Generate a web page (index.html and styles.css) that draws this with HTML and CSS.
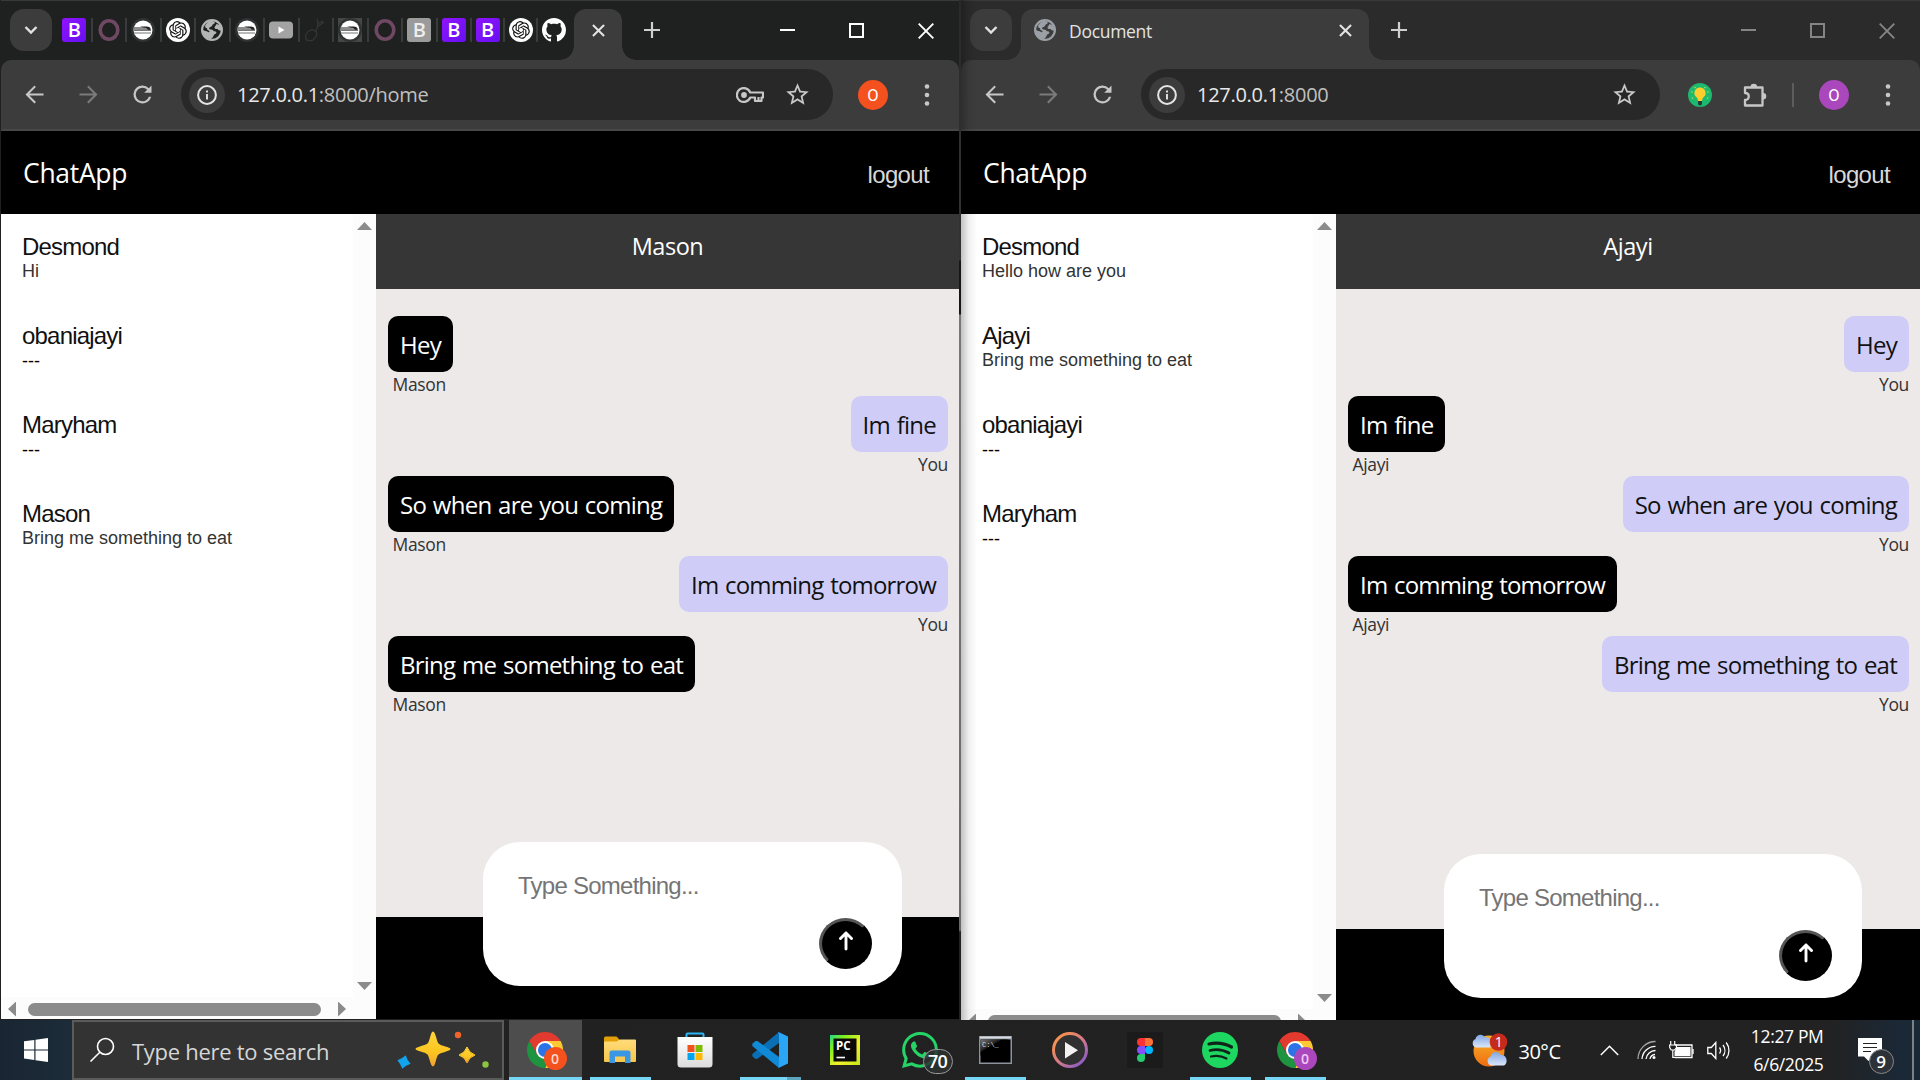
FILE: index.html
```html
<!DOCTYPE html>
<html lang="en">
<head>
<meta charset="utf-8">
<title>ChatApp</title>
<link rel="stylesheet" href="styles.css">
</head>
<body>
<svg class="defs" width="0" height="0">
  <defs>
    <linearGradient id="g-ring" x1="0" y1="0" x2="1" y2="1"><stop offset="0" stop-color="#ff9a3c"/><stop offset=".5" stop-color="#d97a86"/><stop offset="1" stop-color="#7a55d6"/></linearGradient>
    <linearGradient id="g-pc" x1="0" y1="0" x2="1" y2="1"><stop offset="0" stop-color="#21d789"/><stop offset=".25" stop-color="#7cf01e"/><stop offset=".6" stop-color="#f3f02a"/><stop offset="1" stop-color="#c3e61e"/></linearGradient>
    <linearGradient id="g-sun" x1="0" y1="0" x2="0" y2="1"><stop offset="0" stop-color="#f8b52c"/><stop offset="1" stop-color="#ef6c0f"/></linearGradient>
    <linearGradient id="g-cloud" x1="0" y1="0" x2="0" y2="1"><stop offset="0" stop-color="#7fa5e6"/><stop offset="1" stop-color="#dbe7fa"/></linearGradient>
    <linearGradient id="g-star" x1="0" y1="0" x2="0" y2="1"><stop offset="0" stop-color="#ffd53a"/><stop offset=".6" stop-color="#fcc521"/><stop offset="1" stop-color="#f0a032"/></linearGradient>
    <linearGradient id="g-store" x1="0" y1="0" x2="0" y2="1"><stop offset="0" stop-color="#fff"/><stop offset="1" stop-color="#dcdcdc"/></linearGradient>
    <linearGradient id="g-folder" x1="0" y1="0" x2="0" y2="1"><stop offset="0" stop-color="#ffdc7a"/><stop offset="1" stop-color="#f7c64c"/></linearGradient>
    <linearGradient id="g-cmd" x1="0" y1="0" x2="1" y2="1"><stop offset="0" stop-color="#777"/><stop offset=".35" stop-color="#222"/><stop offset=".4" stop-color="#000"/></linearGradient>
  </defs>
  <symbol id="chev" viewBox="0 0 14 10"><path d="M1.5 2l5.500 5.500L12.500 2" fill="none" stroke="currentColor" stroke-width="2.400"/></symbol>
  <symbol id="x" viewBox="0 0 14 14"><path d="M1 1l12 12M13 1L1 13" fill="none" stroke="currentColor" stroke-width="2.200"/></symbol>
  <symbol id="plus" viewBox="0 0 16 16"><path d="M8 0v16M0 8h16" stroke="currentColor" stroke-width="2.200"/></symbol>
  <symbol id="back" viewBox="0 0 24 24"><path fill="currentColor" d="M20 11.100H7.500l5.700-5.700L12 4l-8 8 8 8 1.300-1.400-5.800-5.700H20z"/></symbol>
  <symbol id="reload" viewBox="0 0 24 24"><path fill="currentColor" d="M17.650 6.350A7.958 7.958 0 0 0 12 4a8 8 0 1 0 7.730 10h-2.080A6 6 0 1 1 12 6c1.660 0 3.140.69 4.220 1.780L13.500 10.500H20V4l-2.350 2.350z"/></symbol>
  <symbol id="info" viewBox="0 0 20 20"><circle cx="10" cy="10" r="8.900" fill="none" stroke="currentColor" stroke-width="2"/><path d="M10 9v5.500M10 5.500v2" stroke="currentColor" stroke-width="1.900"/></symbol>
  <symbol id="star" viewBox="0 0 24 24"><path fill="currentColor" d="M22 9.240l-7.190-.62L12 2 9.190 8.630 2 9.240l5.460 4.730L5.820 21 12 17.270 18.180 21l-1.630-7.030L22 9.240zM12 15.400l-3.760 2.270 1-4.280-3.320-2.880 4.380-.38L12 6.100l1.710 4.040 4.380.38-3.320 2.880 1 4.280L12 15.400z"/></symbol>
  <symbol id="key" viewBox="0 0 28 16"><g fill="none" stroke="currentColor" stroke-width="2.200"><path d="M14.200 5.500A6.900 6.900 0 1 0 14.200 10.500H19V14h6.500v-3.500H27V5.500z" stroke-linejoin="round"/><path d="M22.500 10v4"/></g><circle cx="8" cy="8" r="2.900" fill="currentColor"/></symbol>
  <symbol id="dots" viewBox="0 0 6 24"><g fill="currentColor"><circle cx="3" cy="3.500" r="2.300"/><circle cx="3" cy="12" r="2.300"/><circle cx="3" cy="20.500" r="2.300"/></g></symbol>
  <symbol id="puzzle" viewBox="0 0 26 26"><path d="M3 5.500h17.500v18H3v-5.500c5 0 5-7 0-7z" fill="none" stroke="currentColor" stroke-width="2.300" stroke-linejoin="round"/><path fill="currentColor" d="M8.500 5a3.300 3.300 0 0 1 6.600 0zM21 11a3.300 3.300 0 0 1 0 6.600z"/></symbol>
  <symbol id="bulb" viewBox="0 0 24 24"><circle cx="12" cy="12" r="12" fill="#1cb96e"/><g fill="#b9e04b"><circle cx="4" cy="9" r=".8"/><circle cx="7" cy="4.500" r=".8"/><circle cx="17" cy="4.500" r=".8"/><circle cx="20" cy="9" r=".8"/><circle cx="4.500" cy="15" r=".8"/><circle cx="19.500" cy="15" r=".8"/></g><path d="M12 4.500a5.500 5.500 0 0 0-3.500 9.800c1 1 1.300 2 1.500 3.700h4c.2-1.700.5-2.700 1.500-3.700A5.500 5.500 0 0 0 12 4.500z" fill="#ffcd2e"/><path d="M10 18h4v2.500a2 2 0 0 1-4 0z" fill="#243a3a"/></symbol>
  <symbol id="globe" viewBox="2 2 20 20"><circle cx="12" cy="12" r="9" fill="none" stroke="currentColor" stroke-width="2"/><path fill="currentColor" d="M11 3.500c1 .5 3 .3 3.500 1.700.3 1.300-2 1.400-2.300 2.600-.2 1.300-2 1.200-2.700 2.200-.5 1 .3 1.600 1.500 1.500 1.500 0 2.300.7 2.500 1.700 1.500 0 2.500.3 2.500 1.300-.2 1.300-2 1-2.500 2.500-.3 1.500-1.500 2-2.500 3.500-4-.5-7.500-4-7.500-8.500 1.500.8 3.800.8 4.500 1.700.8.800 1.800.5 1.700-.7-1.200-.3-2.500-1.300-2.200-2.500-1.300-.2-2-1-1.700-2.500C7 5.500 9 4 11 3.500zM16 6.500l3 1c1 1.500 1.700 3 1.500 5-1.500.3-2.500-.5-3.500-1.500-1.300.3-2.700-.2-2.700-1.300.2-1.300 1.500-1.700 1.700-3.200z"/></symbol>
  <symbol id="planet" viewBox="0 0 24 24"><circle cx="12" cy="12" r="12" fill="#303233"/><circle cx="12" cy="12" r="9.500" fill="#fff"/><path d="M2.500 9h13c3 0 4 1 4 3.200H2.500" fill="#8d8d8d"/><path d="M2.500 12.300h17.500M3 15h17" fill="none" stroke="#777" stroke-width="1.200"/><path d="M9 8.500h6.500c2.500 0 4 1.200 4.300 3.200h-3c-.5-1.500-1.500-2-3.500-2z" fill="#222"/></symbol>
  <symbol id="gpt" viewBox="0 0 24 24"><circle cx="12" cy="12" r="12" fill="#fff"/><path transform="translate(3.100 3.100) scale(.74)" fill="#111" d="M22.282 9.821a5.985 5.985 0 0 0-.516-4.910 6.046 6.046 0 0 0-6.510-2.900A6.065 6.065 0 0 0 4.981 4.182a5.985 5.985 0 0 0-3.998 2.900 6.046 6.046 0 0 0 .743 7.097 5.980 5.980 0 0 0 .511 4.911 6.051 6.051 0 0 0 6.515 2.900A5.985 5.985 0 0 0 13.260 24a6.056 6.056 0 0 0 5.772-4.206 5.989 5.989 0 0 0 3.998-2.900 6.056 6.056 0 0 0-.748-7.073zm-9.022 12.608a4.476 4.476 0 0 1-2.876-1.041l.142-.080 4.778-2.758a.795.795 0 0 0 .393-.681v-6.737l2.020 1.169a.071.071 0 0 1 .038.052v5.583a4.504 4.504 0 0 1-4.495 4.494zm-9.661-4.125a4.471 4.471 0 0 1-.535-3.014l.142.085 4.783 2.758a.771.771 0 0 0 .781 0l5.843-3.369v2.332a.080.080 0 0 1-.033.062L9.740 19.950a4.499 4.499 0 0 1-6.141-1.646zM2.341 7.896a4.485 4.485 0 0 1 2.366-1.973V11.600a.766.766 0 0 0 .388.677l5.814 3.354-2.020 1.169a.076.076 0 0 1-.071 0l-4.830-2.787A4.504 4.504 0 0 1 2.341 7.872zm16.596 3.856L13.104 8.364 15.119 7.200a.076.076 0 0 1 .071 0l4.830 2.791a4.494 4.494 0 0 1-.677 8.104v-5.677a.790.790 0 0 0-.407-.667zm2.011-3.023l-.142-.085-4.774-2.782a.776.776 0 0 0-.785 0L9.409 9.230V6.897a.066.066 0 0 1 .028-.062l4.830-2.787a4.499 4.499 0 0 1 6.680 4.660zM8.307 12.863l-2.020-1.164a.080.080 0 0 1-.038-.057V6.074a4.499 4.499 0 0 1 7.376-3.454l-.142.081L8.704 5.459a.795.795 0 0 0-.393.681zm1.098-2.365l2.602-1.500 2.607 1.500v2.999l-2.597 1.500-2.607-1.500Z"/></symbol>
  <symbol id="ring" viewBox="0 0 24 24"><ellipse cx="12" cy="12" rx="8.800" ry="9.300" fill="none" stroke="#6f4863" stroke-width="3.600"/></symbol>
  <symbol id="tube" viewBox="0 0 24 24"><rect y="3.500" width="24" height="17" rx="4" fill="#a3a3a3"/><path d="M9.500 8.500v7l6-3.500z" fill="#fff"/></symbol>
  <symbol id="sketch" viewBox="0 0 24 24"><path d="M4 23c-4-2-3-9 3-11 6-1 7 5 4 8-2 3-5 3-7 2M12 13c2-4 3-7 1-12M13 6l6-3M13 9l7-5" fill="none" stroke="#343636" stroke-width="1.300"/></symbol>
  <symbol id="hub" viewBox="0 0 16 16"><path fill="#fff" d="M8 0C3.580 0 0 3.580 0 8c0 3.540 2.290 6.530 5.470 7.590.4.070.55-.17.55-.38 0-.19-.01-.82-.01-1.490-2.010.37-2.530-.49-2.690-.94-.09-.23-.48-.94-.82-1.130-.28-.15-.68-.52-.01-.53.63-.01 1.080.58 1.230.82.72 1.210 1.870.87 2.330.66.070-.52.28-.87.51-1.070-1.780-.2-3.640-.89-3.640-3.950 0-.87.31-1.590.82-2.150-.08-.2-.36-1.020.08-2.120 0 0 .67-.21 2.200.82.64-.18 1.320-.27 2-.27s1.360.09 2 .27c1.530-1.040 2.200-.82 2.200-.82.44 1.100.16 1.920.08 2.120.51.56.82 1.270.82 2.150 0 3.070-1.870 3.750-3.650 3.950.29.25.54.73.54 1.480 0 1.070-.01 1.930-.01 2.200 0 .21.15.46.55.38A8.010 8.010 0 0 0 16 8c0-4.420-3.580-8-8-8z"/></symbol>
  <symbol id="min" viewBox="0 0 16 16"><path d="M0 8h15" stroke="currentColor" stroke-width="2"/></symbol>
  <symbol id="max" viewBox="0 0 16 16"><path d="M1 1h13v13H1z" fill="none" stroke="currentColor" stroke-width="2"/></symbol>
  <symbol id="close" viewBox="0 0 16 16"><path d="M.7.7l14.600 14.600M15.300.7L.7 15.300" stroke="currentColor" stroke-width="1.900"/></symbol>
  <symbol id="send" viewBox="0 0 16 20"><path d="M8 18V2M2.500 7.500L8 2l5.500 5.500" fill="none" stroke="#fff" stroke-width="2.900" stroke-linecap="round" stroke-linejoin="round"/></symbol>
  <symbol id="chrome" viewBox="2 2 44 44"><path fill="#fcc934" d="M24 13H43.050A22 22 0 0 1 24 46L33.530 29.500z"/><path fill="#1e9440" d="M33.530 29.500L24 46A22 22 0 0 1 4.950 13L14.470 29.500z"/><path fill="#e23a2e" d="M14.470 29.500L4.950 13A22 22 0 0 1 43.050 13H24z"/><circle cx="24" cy="24" r="11" fill="#fff"/><circle cx="24" cy="24" r="8.600" fill="#2b74e8"/></symbol>
</svg>

<div class="desktop">
  <div class="windows">
    <!-- left window -->
    <section class="window focused">
      <div class="tabstrip">
        <div class="tab-menu"><svg width="14" height="10"><use href="#chev"/></svg></div>
        <div class="pinned">
          <div class="pin"><b class="boot">B</b></div>
          <div class="pin"><svg><use href="#ring"/></svg></div>
          <div class="pin"><svg><use href="#planet"/></svg></div>
          <div class="pin"><svg><use href="#gpt"/></svg></div>
          <div class="pin"><svg class="grey"><use href="#globe"/></svg></div>
          <div class="pin"><svg><use href="#planet"/></svg></div>
          <div class="pin"><svg><use href="#tube"/></svg></div>
          <div class="pin"><svg><use href="#sketch"/></svg></div>
          <div class="pin"><svg class="boxed"><use href="#planet"/></svg></div>
          <div class="pin"><svg><use href="#ring"/></svg></div>
          <div class="pin"><b class="boot dull">B</b></div>
          <div class="pin"><b class="boot">B</b></div>
          <div class="pin near"><b class="boot">B</b></div>
          <div class="pin near"><svg><use href="#gpt"/></svg></div>
          <div class="pin last"><svg><use href="#hub"/></svg></div>
        </div>
        <div class="tab mini"><svg width="13" height="13"><use href="#x"/></svg></div>
        <svg class="new-tab" width="16" height="16"><use href="#plus"/></svg>
        <div class="controls">
          <svg><use href="#min"/></svg><svg><use href="#max"/></svg><svg><use href="#close"/></svg>
        </div>
      </div>
      <div class="toolbar">
        <svg class="nav"><use href="#back"/></svg>
        <svg class="nav off"><use href="#back"/></svg>
        <svg class="nav"><use href="#reload"/></svg>
        <div class="omnibox">
          <span class="site"><svg width="20" height="20"><use href="#info"/></svg></span>
          <span class="url">127.0.0.1<i>:8000/home</i></span>
          <svg class="key" width="28" height="16"><use href="#key"/></svg>
          <svg class="fav" width="27" height="27"><use href="#star"/></svg>
        </div>
        <span class="avatar orange">O</span>
        <svg class="more" width="6" height="24"><use href="#dots"/></svg>
      </div>
      <header class="app-bar"><span class="brand">ChatApp</span><span class="logout">logout</span></header>
      <main class="chat-app">
        <aside class="contacts">
          <ul class="list">
            <li><h3>Desmond</h3><p>Hi</p></li>
            <li><h3>obaniajayi</h3><p class="none">---</p></li>
            <li><h3>Maryham</h3><p class="none">---</p></li>
            <li><h3>Mason</h3><p>Bring me something to eat</p></li>
          </ul>
          <div class="vbar"><i class="up"></i><i class="down"></i></div>
          <div class="hbar"><i class="left"></i><i class="thumb"></i><i class="right"></i></div>
        </aside>
        <section class="chat">
          <h2 class="peer">Mason</h2>
          <div class="messages">
            <div class="msg"><p>Hey</p><small>Mason</small></div>
            <div class="msg mine"><p>Im fine</p><small>You</small></div>
            <div class="msg"><p>So when are you coming</p><small>Mason</small></div>
            <div class="msg mine"><p class="tight">Im comming tomorrow</p><small>You</small></div>
            <div class="msg"><p>Bring me something to eat</p><small>Mason</small></div>
          </div>
          <footer class="composer"><div class="box"><span class="hint">Type Something...</span><span class="send"><svg width="16" height="20"><use href="#send"/></svg></span></div></footer>
        </section>
      </main>
    </section>

    <div class="seam"></div>

    <!-- right window -->
    <section class="window behind">
      <div class="tabstrip">
        <div class="tab-menu"><svg width="14" height="10"><use href="#chev"/></svg></div>
        <div class="tab wide">
          <svg class="globe" width="22" height="22"><use href="#globe"/></svg>
          <span class="tab-title">Document</span>
          <svg width="13" height="13"><use href="#x"/></svg>
        </div>
        <svg class="new-tab" width="16" height="16"><use href="#plus"/></svg>
        <div class="controls">
          <svg><use href="#min"/></svg><svg><use href="#max"/></svg><svg><use href="#close"/></svg>
        </div>
      </div>
      <div class="toolbar">
        <svg class="nav"><use href="#back"/></svg>
        <svg class="nav off"><use href="#back"/></svg>
        <svg class="nav"><use href="#reload"/></svg>
        <div class="omnibox">
          <span class="site"><svg width="20" height="20"><use href="#info"/></svg></span>
          <span class="url">127.0.0.1<i>:8000</i></span>
          <svg class="fav" width="27" height="27"><use href="#star"/></svg>
        </div>
        <svg class="ext" width="24" height="24"><use href="#bulb"/></svg>
        <svg class="ext-menu" width="26" height="26"><use href="#puzzle"/></svg>
        <span class="rule"></span>
        <span class="avatar purple">O</span>
        <svg class="more" width="6" height="24"><use href="#dots"/></svg>
      </div>
      <header class="app-bar"><span class="brand">ChatApp</span><span class="logout">logout</span></header>
      <main class="chat-app">
        <aside class="contacts">
          <ul class="list">
            <li><h3>Desmond</h3><p>Hello how are you</p></li>
            <li><h3>Ajayi</h3><p>Bring me something to eat</p></li>
            <li><h3>obaniajayi</h3><p class="none">---</p></li>
            <li><h3>Maryham</h3><p class="none">---</p></li>
          </ul>
          <div class="vbar"><i class="up"></i><i class="down"></i></div>
          <div class="hbar"><i class="left"></i><i class="thumb"></i><i class="right"></i></div>
        </aside>
        <section class="chat">
          <h2 class="peer">Ajayi</h2>
          <div class="messages">
            <div class="msg mine"><p>Hey</p><small>You</small></div>
            <div class="msg"><p>Im fine</p><small>Ajayi</small></div>
            <div class="msg mine"><p>So when are you coming</p><small>You</small></div>
            <div class="msg"><p class="tight">Im comming tomorrow</p><small>Ajayi</small></div>
            <div class="msg mine"><p>Bring me something to eat</p><small>You</small></div>
          </div>
          <footer class="composer"><div class="box"><span class="hint">Type Something...</span><span class="send"><svg width="16" height="20"><use href="#send"/></svg></span></div></footer>
        </section>
      </main>
    </section>
  </div>

  <footer class="taskbar">
    <div class="start"><svg width="24" height="24" viewBox="0 0 24 24"><path fill="#fff" d="M0 3.300L10.300 2v9.400H0zM11.500 1.800L24 0v11.400H11.500zM0 12.500h10.300V22L0 20.600zM11.500 12.500H24V24l-12.500-1.800z"/></svg></div>
    <div class="search">
      <svg width="26" height="26" viewBox="0 0 26 26"><circle cx="16.500" cy="9.500" r="8" fill="none" stroke="#fff" stroke-width="1.600"/><path d="M10.800 15.200L1.500 24.500" stroke="#fff" stroke-width="1.600"/></svg>
      <span>Type here to search</span>
      <svg class="sparkles" width="96" height="40" viewBox="0 0 96 40"><path transform="translate(37 19)" fill="url(#g-star)" d="M0-17.500C2.500-17.500 3.500-8 5.500-5.500S17.500-2 17.500 0 8 3.500 5.500 5.500 2.500 17.500 0 17.500-3.500 8-5.500 5.500-17.500 2-17.500 0-8-3.500-5.500-5.500-2.500-17.500 0-17.500z"/><path transform="translate(71 25)" fill="url(#g-star)" d="M0-8Q2-2 8 0 2 2 0 8-2 2-8 0-2-2 0-8z" stroke="url(#g-star)" stroke-width="1"/><path transform="translate(8 32) rotate(15)" fill="#12a5ee" stroke="#12a5ee" d="M0-6Q2-2.500 6 0 2.500 2.500 0 6-2.500 2.500-6 0-2.500-2.500 0-6z"/><circle cx="62" cy="5" r="3.200" fill="#f0642c"/><circle cx="89.500" cy="34.500" r="3.200" fill="#8cc63f"/></svg>
    </div>
    <nav class="apps">
      <div class="app on active"><svg width="36" height="36"><use href="#chrome"/></svg><b class="badge-o">0</b></div>
      <div class="app on"><svg width="32" height="28" viewBox="0 0 32 28"><path d="M0 2a1.500 1.500 0 0 1 1.500-1.500h11L15 3v4H0z" fill="#e3a008"/><path d="M0 5.500h13l2.500-2H31a1 1 0 0 1 1 1V25a1 1 0 0 1-1 1H1a1 1 0 0 1-1-1z" fill="url(#g-folder)"/><path d="M5.500 27V16.500a2 2 0 0 1 2-2h17a2 2 0 0 1 2 2V27h-5.500v-6.500H11V27z" fill="#3b97e3"/></svg></div>
      <div class="app"><svg width="36" height="36" viewBox="0 0 36 36"><path d="M9.500 6V2.500a1 1 0 0 1 1-1h15a1 1 0 0 1 1 1V6" fill="none" stroke="#2eb5f5" stroke-width="2"/><path d="M.5 5h35v27a3.500 3.500 0 0 1-3.500 3.500H4A3.500 3.500 0 0 1 .5 32z" fill="url(#g-store)"/><path fill="#f1511b" d="M10.500 13h7v7h-7z"/><path fill="#80bb03" d="M18.500 13h7v7h-7z"/><path fill="#00a4ef" d="M10.500 21h7v7h-7z"/><path fill="#ffb900" d="M18.500 21h7v7h-7z"/></svg></div>
      <div class="app on split"><svg width="36" height="36" viewBox="0 0 36 36"><path d="M27 0v11L5.500 26.700 3.500 27 .3 24.200v-2.100z" fill="#0a6fb5"/><path d="M.3 11.800L3.500 9h2L27 25v11L.3 14z" fill="#1089d6"/><path d="M26.500 0L36 4.500v27L26.500 36c-1 0 .5-1 .5-2V2c0-1-1.500-2-.5-2z" fill="#2ba5f5"/></svg></div>
      <div class="app"><svg width="30" height="30" viewBox="0 0 30 30"><path fill="url(#g-pc)" d="M0 0h30v30H0z"/><path d="M3.500 3.500h23v23h-23z" fill="#0a0a0a"/><path d="M6.500 22.500h8.500" stroke="#fff" stroke-width="1.600"/><text x="6" y="15" class="pc">PC</text></svg></div>
      <div class="app"><svg width="36" height="36" viewBox="0 0 16 16"><path fill="#25d366" d="M13.601 2.326A7.850 7.850 0 0 0 7.994 0C3.627 0 .068 3.558.064 7.926c0 1.399.366 2.760 1.057 3.965L0 16l4.204-1.102a7.900 7.900 0 0 0 3.790.965h.004c4.368 0 7.926-3.558 7.930-7.930A7.900 7.900 0 0 0 13.600 2.326zM7.994 14.521a6.600 6.600 0 0 1-3.356-.92l-.24-.144-2.494.654.666-2.433-.156-.251a6.560 6.560 0 0 1-1.007-3.505c0-3.626 2.957-6.584 6.591-6.584a6.560 6.560 0 0 1 4.660 1.931 6.560 6.560 0 0 1 1.928 4.660c-.004 3.639-2.961 6.592-6.592 6.592m3.615-4.934c-.197-.099-1.170-.578-1.353-.646-.182-.065-.315-.099-.445.099-.133.197-.513.646-.627.775-.114.133-.232.148-.43.05-.197-.1-.836-.308-1.592-.985-.59-.525-.985-1.175-1.103-1.372-.114-.198-.011-.304.088-.403.087-.088.197-.232.296-.346.1-.114.133-.198.198-.33.065-.134.034-.248-.015-.347-.05-.099-.445-1.076-.612-1.470-.16-.389-.323-.335-.445-.34-.114-.007-.247-.007-.38-.007a.73.73 0 0 0-.529.247c-.182.198-.691.677-.691 1.654s.71 1.916.81 2.049c.098.133 1.394 2.132 3.383 2.992.47.205.84.326 1.129.418.475.152.904.129 1.246.08.38-.058 1.171-.48 1.338-.943.164-.464.164-.86.114-.943-.049-.084-.182-.133-.38-.232"/></svg><b class="count">70</b></div>
      <div class="app on"><svg width="33" height="28" viewBox="0 0 33 28"><path d="M0 0h33v28H0z" fill="#8c939c"/><path d="M1 .5h31v2H1z" fill="#d7dbe2"/><path d="M1.500 3.500h30v23h-30z" fill="#000"/><path d="M1.500 3.500h28Q6 9 1.500 20z" fill="url(#g-cmd)"/><text x="3" y="11" class="cmd">C:\_</text></svg></div>
      <div class="app"><svg width="36" height="36" viewBox="0 0 36 36"><circle cx="18" cy="18" r="16.500" fill="#303030" stroke="url(#g-ring)" stroke-width="3"/><path d="M13 10v16.500l13-8.300z" fill="#f2f2f2"/></svg></div>
      <div class="app"><svg width="36" height="36" viewBox="0 0 36 36"><rect width="36" height="36" rx="2" fill="#1b1b1b"/><path d="M14 6h4v8h-4a4 4 0 0 1 0-8z" fill="#f33"/><path d="M18 6h4a4 4 0 0 1 0 8h-4z" fill="#ff7237"/><path d="M14 14h4v8h-4a4 4 0 0 1 0-8z" fill="#874fff"/><circle cx="22" cy="18" r="4" fill="#00b6ff"/><path d="M14 22h4v4a4 4 0 1 1-4-4z" fill="#24cb71"/></svg></div>
      <div class="app on"><svg width="36" height="36" viewBox="0 0 36 36"><circle cx="18" cy="18" r="18" fill="#1ed760"/><g fill="none" stroke="#10251a" stroke-linecap="round"><path d="M7 12q12-2.500 22.500 3" stroke-width="3.200"/><path d="M8 18.500q10-2.500 19 2.500" stroke-width="2.700"/><path d="M9 24.500q8.500-2 15.500 2" stroke-width="2.200"/></g></svg></div>
      <div class="app on"><svg width="36" height="36"><use href="#chrome"/></svg><b class="badge-o violet">0</b></div>
    </nav>
    <div class="tray">
      <svg class="weather" width="37" height="34" viewBox="0 0 37 34"><circle cx="18" cy="18" r="15.500" fill="url(#g-sun)"/><path d="M5 14.500a4.500 4.500 0 0 1-.5-8.500C5 1 12 0 14 4.500c5-1 6.500 3 5.500 10z" fill="url(#g-cloud)"/><path d="M20 32.500a4.800 4.800 0 0 1-.5-9c1-5 8-6.500 10.500-1.500 6-.5 7.500 8 3 10.500z" fill="url(#g-cloud)"/><circle cx="27.500" cy="9" r="8.800" fill="#c42b1c"/><text x="23.800" y="14.300" class="one">1</text></svg>
      <span class="temp">30°C</span>
      <svg class="chevron" width="19" height="11" viewBox="0 0 19 11"><path d="M.8 10L9.500 1.300 18.200 10" fill="none" stroke="#fff" stroke-width="1.500"/></svg>
      <svg class="wifi" width="20" height="20" viewBox="0 0 20 20"><g fill="none" stroke="#fff" stroke-width="1.300"><path d="M1 19A17.500 17.500 0 0 1 18.500 1.500" opacity=".6"/><path d="M5 19A13.500 13.500 0 0 1 18.500 6.300"/><path d="M9 19a9.500 9.500 0 0 1 9.500-8.500"/><path d="M13 19a5.500 5.500 0 0 1 5-4.500"/></g><circle cx="17" cy="17.500" r="1.500" fill="#fff"/></svg>
      <svg class="battery" width="25" height="18" viewBox="0 0 25 18"><path d="M6 4h17v12.500H6" fill="none" stroke="#fff" stroke-width="1.300"/><path d="M7.500 6h14v9H5.500v-4z" fill="#fff"/><path d="M24 8v5" stroke="#fff" stroke-width="1.300"/><path d="M1.700 0v4M5.700 0v4M0 4h7.500v2.500l-2 2.500H2.200L.7 6.500V4M3.800 9v7.300H6" fill="none" stroke="#fff" stroke-width="1.200"/></svg>
      <svg class="sound" width="23" height="19" viewBox="0 0 23 19"><g fill="none" stroke="#fff" stroke-width="1.300"><path d="M.8 6.500h3.500l4.500-5v16l-4.500-5H.8z"/><path d="M12.500 6.500a5 5 0 0 1 0 6M16 4a9 9 0 0 1 0 11M19.200 1.500a13 13 0 0 1 0 16"/></g></svg>
      <div class="clock"><span>12:27 PM</span><span>6/6/2025</span></div>
      <div class="notice"><svg width="24" height="24" viewBox="0 0 24 24"><path d="M0 0h24v18.500H15L10.500 23 6 18.500H0z" fill="#fff"/><path d="M5 5.500h14M5 9.500h14M5 13.500h8" stroke="#222" stroke-width="1.200"/></svg><b>9</b></div>
      <span class="peek"></span>
    </div>
  </footer>
</div>
</body>
</html>
```
FILE: styles.css
```css
* { box-sizing: border-box; margin: 0; padding: 0; }
body { width: 1920px; height: 1080px; overflow: hidden; background: #202020; font-family: "Open Sans", "Noto Sans", sans-serif; }
i { font-style: normal; }
svg { display: block; flex: none; }
.defs { position: absolute; }

.desktop { display: grid; grid-template-rows: 1020px 60px; height: 1080px; }
.windows { display: grid; grid-template-columns: 958px 2px 959px; padding-left: 1px; height: 1020px; overflow: hidden; align-items: start; }
.window { display: flex; flex-direction: column; position: relative; background: linear-gradient(var(--strip) 80px, #000 80px); }
.focused { height: 1019px; --strip: #1f2120; --ctl: #fff; }
.behind { height: 1031px; --strip: #2b2b2b; --ctl: #858585; }
.behind::before { content: ""; position: absolute; left: 0; top: 0; bottom: 0; width: 16px; background: linear-gradient(90deg, rgba(0,0,0,.24), rgba(0,0,0,.06) 50%, transparent); z-index: 3; }
.seam { height: 1020px; background: linear-gradient(#2a2a2a 0, #333 260px, #161616 261px, #161616 314px, #777 315px, #6a6a6a 930px, #222 932px); }

/* tab strip */
.tabstrip { height: 60px; flex: none; background: var(--strip); display: flex; align-items: flex-start; padding: 8px 0 0 9px; color: #e3e3e3; border-top: 1px solid #383a3a; }
.tab-menu { width: 42px; height: 42px; border-radius: 14px; background: #3c3c3c; display: flex; align-items: center; justify-content: center; flex: none; }
.pinned { display: flex; margin-left: 6px; width: 516px; height: 42px; }
.pin { width: 34.5px; display: flex; align-items: center; justify-content: center; border-right: 2px solid #3a3c3c; height: 24px; margin-top: 9px; flex: none; }
.pin.near { width: 33px; }
.pin.last { border: 0; width: 32px; }
.pin svg { width: 24px; height: 24px; }
.pin svg.grey { width: 22px; height: 22px; color: #b4b4b4; }
.pin svg.boxed { background: #454747; }
.boot { width: 24px; height: 24px; border-radius: 3px; background: linear-gradient(135deg, #9013fe, #6610f2); color: #fff; font: 600 20px/24px "Open Sans", sans-serif; text-align: center; }
.boot.dull { background: #9b9b9b; color: #eee; }
.tab { height: 51px; background: #3c3c3c; border-radius: 12px 12px 0 0; display: flex; align-items: center; position: relative; flex: none; padding-bottom: 9px; color: #e3e3e3; }
.tab::before, .tab::after { content: ""; position: absolute; bottom: 0; width: 14px; height: 14px; }
.tab::before { left: -14px; background: radial-gradient(circle at 0 0, transparent 13.5px, #3c3c3c 14px); }
.tab::after { right: -14px; background: radial-gradient(circle at 100% 0, transparent 13.5px, #3c3c3c 14px); }
.tab.mini { width: 48px; justify-content: center; }
.tab.wide { width: 348px; margin-left: 9px; padding-left: 13px; }
.tab.wide > svg:last-child { margin-left: auto; margin-right: 17px; }
.globe { color: #9aa0a6; }
.tab-title { font-size: 17.5px; letter-spacing: -.3px; margin-left: 13px; line-height: 42px; padding-top: 2px; }
.new-tab { margin: 13px 0 0 22px; color: #cfcfcf; }
.controls { margin-left: auto; display: flex; gap: 53px; margin-right: 25px; padding-top: 14px; color: var(--ctl); }
.controls svg { width: 16px; height: 16px; }
.controls svg:first-child { margin-top: -1px; }

/* toolbar */
.toolbar { height: 71px; flex: none; background: #3c3c3c; border-bottom: 2px solid #474747; border-radius: 10px 10px 0 0; display: flex; align-items: center; padding-left: 20px; color: #c7c7c7; }
.nav { width: 27px; height: 27px; margin-right: 27px; }
.nav.off { color: #7b7b7b; transform: scaleX(-1); }
.nav:nth-child(3) { margin-right: 25px; }
.omnibox { height: 51px; border-radius: 26px; background: #282828; display: flex; align-items: center; padding: 0 22px 0 8px; width: 652px; }
.behind .omnibox { width: 519px; }
.site { width: 36px; height: 36px; border-radius: 50%; background: #3c3c3c; display: flex; align-items: center; justify-content: center; color: #e3e3e3; }
.url { font-size: 20px; letter-spacing: -.28px; color: #e8e8e8; margin-left: 12px; margin-right: auto; }
.url i { color: #c0c0c0; }
.key { margin-right: 20px; }
.avatar { width: 30px; height: 30px; border-radius: 50%; color: #fff; font: 16.5px/31px Roboto, sans-serif; text-align: center; margin-left: 25px; }
.orange { background: #f4511e; }
.purple { background: #ab47bc; }
.more { margin-left: 36px; }
.ext { margin-left: 28px; }
.ext-menu { margin-left: 30px; }
.rule { width: 2px; height: 24px; background: #5c5c5c; margin-left: 24px; }

/* chat application */
.app-bar { height: 83px; flex: none; background: #000; display: flex; justify-content: space-between; align-items: center; padding: 0 30px 0 22px; }
.brand { font-size: 26.5px; letter-spacing: -.3px; color: #fff; padding-top: 1px; }
.logout { font: 24px "Liberation Sans", Arial, sans-serif; letter-spacing: -.66px; color: #d8d8d8; padding-top: 5px; }
.chat-app { flex: 1; display: grid; grid-template-columns: 375px 1fr; min-height: 0; }
.contacts { background: #fff; display: grid; grid-template: 1fr 22px / 352px 23px; font-family: "Liberation Sans", Arial, sans-serif; }
.list { list-style: none; padding: 21px 0 0 21px; }
.list li { height: 89px; }
.list h3 { font-weight: 400; font-size: 24px; letter-spacing: -.8px; line-height: 24px; padding-bottom: 1px; color: #111; }
.list p { font-size: 18px; line-height: 22px; color: #333; }
.list p.none { color: #000; line-height: 24px; }
.vbar { background: #fcfcfc; display: flex; flex-direction: column; justify-content: space-between; align-items: center; padding: 8px 0 7px; }
.vbar i { width: 15px; height: 8px; background: #8b8b8b; }
.up { clip-path: polygon(50% 0, 100% 100%, 0 100%); }
.down { clip-path: polygon(0 0, 100% 0, 50% 100%); }
.hbar { grid-column: 1 / 3; background: #fcfcfc; display: flex; align-items: center; padding: 2px 0 0 7px; }
.hbar .left, .hbar .right { width: 8px; height: 15px; background: #8b8b8b; }
.left { clip-path: polygon(100% 0, 100% 100%, 0 50%); }
.right { clip-path: polygon(0 0, 100% 50%, 0 100%); margin-left: 17px; }
.thumb { width: 293px; height: 13px; border-radius: 7px; background: #8b8b8b; margin-left: 12px; }
.chat { display: flex; flex-direction: column; background: #ede9e8; min-width: 0; }
.peer { height: 75px; flex: none; background: #363636; color: #fff; font-weight: 400; font-size: 23.5px; line-height: 65px; letter-spacing: -.45px; text-align: center; }
.messages { flex: 1; padding: 27px 11px 0 12px; }
.msg { display: flex; flex-direction: column; align-items: flex-start; height: 80px; }
.msg p { height: 56px; border-radius: 10px; background: #000; color: #fff; font-size: 24px; letter-spacing: -.75px; word-spacing: 1.25px; line-height: 56px; padding: 1px 12px 0; white-space: nowrap; }
.msg p.tight { letter-spacing: -.81px; }
.msg small { font-size: 17.5px; line-height: 24px; letter-spacing: -.35px; color: #333; margin-left: 4.500px; }
.msg.mine { align-items: flex-end; }
.msg.mine p { background: #cfcdf8; color: #111; }
.composer { height: 102px; flex: none; background: #000; padding-left: 107px; }
.behind .composer { padding-left: 108px; }
.box { width: 419px; height: 144px; margin-top: -75px; border-radius: 37px; background: #fff; display: flex; justify-content: space-between; padding: 0 30px 0 35px; }
.behind .box { width: 418px; }
.focused .chat, .behind .chat { position: relative; }
.hint { font: 24px/26px "Liberation Sans", Arial, sans-serif; letter-spacing: -.75px; color: #757575; padding-top: 31px; }
.send { width: 53px; height: 51px; margin-top: 76px; border-radius: 50%; background: #000; border: 3px solid; border-color: #555 #000 #000 #555; display: flex; align-items: center; justify-content: center; padding-bottom: 5px; }

/* taskbar */
.taskbar { background: linear-gradient(90deg, #1a2533 0, #1c2c39 70px, #212121 110px, #222 1830px, #1b2836 1900px); display: flex; }
.start { width: 72px; display: flex; align-items: center; justify-content: center; }
.search { width: 432px; height: 60px; border: 2px solid #5b5b5b; background: #333; display: flex; align-items: center; padding-left: 15px; }
.search span { font-size: 22px; letter-spacing: -.28px; color: #d6d6d6; margin-left: 17px; width: 264px; white-space: nowrap; padding-top: 1px; }
.apps { display: flex; margin-left: 3.500px; }
.app { width: 75px; height: 60px; display: flex; align-items: center; justify-content: center; position: relative; }
.app.on::after { content: ""; position: absolute; left: 7px; right: 7px; bottom: 0; height: 3px; background: #76d6f5; }
.app.active::before { content: ""; position: absolute; inset: 0 1px; background: #4d4d4d; }
.app.active::after { left: 1px; right: 1px; }
.app.split::after { background: linear-gradient(90deg, #76d6f5 47px, #5ba5bd 47px); }
.app svg { position: relative; }
.badge-o { position: absolute; right: 16px; top: 27px; width: 23px; height: 23px; border-radius: 50%; background: #f4511e; color: #ffd9c8; font: 600 14px/23px "Open Sans", sans-serif; text-align: center; }
.badge-o.violet { background: #ab47bc; color: #f0c8f5; }
.count { position: absolute; left: 40px; top: 29px; width: 30px; height: 25px; border-radius: 13px; border: 1px solid #999; background: rgba(45,50,48,.85); color: #fff; font: 600 18px/23px "Open Sans", sans-serif; letter-spacing: -.8px; text-align: center; z-index: 1; }
.pc { font: 700 11.500px "Open Sans", sans-serif; fill: #fff; }
.cmd { font: 7px "Liberation Mono", monospace; fill: #ddd; }
.one { font: 14px "Open Sans", sans-serif; fill: #fff; }
.tray { display: flex; align-items: center; margin-left: 138px; color: #fff; flex: 1; }
.temp { font-size: 20px; letter-spacing: -.5px; margin-left: 11px; width: 81px; padding-top: 2px; }
.wifi { margin-left: 18px; }
.battery { margin-left: 12px; }
.sound { margin-left: 13px; }
.clock { width: 74px; margin-left: 20px; display: flex; flex-direction: column; text-align: right; font-size: 17.5px; letter-spacing: -.35px; line-height: 28px; white-space: nowrap; }
.notice { margin-left: 34px; width: 40px; height: 60px; padding-top: 18px; position: relative; }
.notice b { position: absolute; left: 11px; top: 29px; width: 25px; height: 25px; border-radius: 50%; border: 1px solid #888; background: #2c3238; font: 600 17px/23px "Open Sans", sans-serif; text-align: center; }
.peek { width: 2px; height: 60px; background: #7a838c; margin-left: 14px; }
```
